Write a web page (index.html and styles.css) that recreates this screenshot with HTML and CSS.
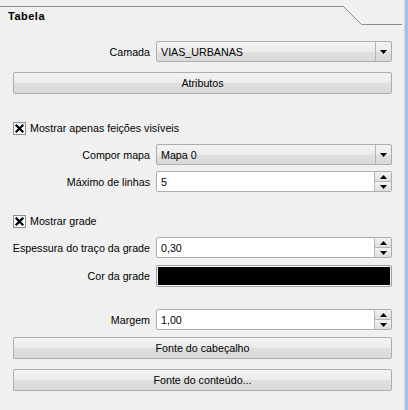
FILE: index.html
```html
<!DOCTYPE html>
<html lang="pt">
<head>
<meta charset="utf-8">
<link rel="stylesheet" href="styles.css">
</head>
<body>
<div class="panel">
  <div class="main">
    <div class="header">
      <svg class="tabline" width="405" height="26" viewBox="0 0 405 26"><path d="M0 6.5 H343.5 L361.5 24.5 H402" fill="none" stroke="#8e8e8e" stroke-width="1"/></svg>
      <span class="title">Tabela</span>
    </div>
    <div class="content">
      <div class="form first">
        <label class="lbl">Camada</label>
        <div class="combo"><span class="val">VIAS_URBANAS</span><span class="drop"><svg width="7" height="4" viewBox="0 0 7 4"><path d="M0 0H7L3.5 4Z" fill="#000"/></svg></span></div>
      </div>
      <button class="btn b-attr">Atributos</button>

      <div class="check c1"><span class="box"><svg width="13" height="13" viewBox="0 0 13 13"><path d="M3.5 3.5L9.5 9.5M9.5 3.5L3.5 9.5" stroke="#000" stroke-width="2.2" stroke-linecap="square"/></svg></span><span>Mostrar apenas feições visíveis</span></div>
      <div class="form f2">
        <label class="lbl">Compor mapa</label>
        <div class="combo"><span class="val">Mapa 0</span><span class="drop"><svg width="7" height="4" viewBox="0 0 7 4"><path d="M0 0H7L3.5 4Z" fill="#000"/></svg></span></div>
        <label class="lbl">Máximo de linhas</label>
        <div class="spin"><span class="val">5</span><span class="arrows"><span class="up"><svg width="7" height="4" viewBox="0 0 7 4"><path d="M0 4H7L3.5 0Z" fill="#000"/></svg></span><span class="down"><svg width="7" height="4" viewBox="0 0 7 4"><path d="M0 0H7L3.5 4Z" fill="#000"/></svg></span></span></div>
      </div>

      <div class="check c2"><span class="box"><svg width="13" height="13" viewBox="0 0 13 13"><path d="M3.5 3.5L9.5 9.5M9.5 3.5L3.5 9.5" stroke="#000" stroke-width="2.2" stroke-linecap="square"/></svg></span><span>Mostrar grade</span></div>
      <div class="form f3">
        <label class="lbl">Espessura do traço da grade</label>
        <div class="spin"><span class="val">0,30</span><span class="arrows"><span class="up"><svg width="7" height="4" viewBox="0 0 7 4"><path d="M0 4H7L3.5 0Z" fill="#000"/></svg></span><span class="down"><svg width="7" height="4" viewBox="0 0 7 4"><path d="M0 0H7L3.5 4Z" fill="#000"/></svg></span></span></div>
        <label class="lbl">Cor da grade</label>
        <div class="color"><span class="swatch"></span></div>
      </div>

      <div class="form f4">
        <label class="lbl">Margem</label>
        <div class="spin"><span class="val">1,00</span><span class="arrows"><span class="up"><svg width="7" height="4" viewBox="0 0 7 4"><path d="M0 4H7L3.5 0Z" fill="#000"/></svg></span><span class="down"><svg width="7" height="4" viewBox="0 0 7 4"><path d="M0 0H7L3.5 4Z" fill="#000"/></svg></span></span></div>
      </div>
      <button class="btn b-cab">Fonte do cabeçalho</button>
      <button class="btn b-cont">Fonte do conteúdo...</button>
    </div>
  </div>
  <div class="edge"></div>
</div>
</body>
</html>
```
FILE: styles.css
```css
html, body {
  margin: 0;
  padding: 0;
  background: #f0f0f0;
}
body {
  font-family: "Liberation Sans", Arial, sans-serif;
  font-size: 10.7px;
  color: #000;
}
.panel {
  width: 408px;
  height: 410px;
  display: flex;
  overflow: hidden;
}
.main {
  flex: 1;
  display: flex;
  flex-direction: column;
}
.edge {
  width: 3px;
  background: #98c5ee;
  border-left: 1px solid #d4d4d4;
}
.header {
  position: relative;
  height: 26px;
}
.tabline {
  position: absolute;
  left: 0;
  top: 0;
}
.title {
  display: block;
  padding: 9px 0 0 8px;
  font-weight: bold;
  font-size: 11px;
  letter-spacing: 0.5px;
  line-height: 14px;
}
.content {
  display: flex;
  flex-direction: column;
  padding: 0 12px 0 12px;
}
.form {
  display: grid;
  grid-template-columns: 138px 1fr;
  column-gap: 6px;
  align-items: center;
}
.first { margin-top: 15px; }
.f2 { margin-top: 8px; row-gap: 6px; }
.f3 { margin-top: 8px; row-gap: 7px; }
.f4 { margin-top: 22px; }
.lbl {
  text-align: right;
  white-space: nowrap;
  line-height: 14px;
}
.combo {
  height: 21px;
  box-sizing: border-box;
  border: 1px solid #acacac;
  border-radius: 2px;
  background: linear-gradient(to bottom, #f3f3f3 0%, #ebebeb 50%, #dfdfdf 51%, #dadada 100%);
  display: flex;
  align-items: center;
}
.val {
  flex: 1;
  padding-left: 4px;
  line-height: 14px;
}
.drop {
  width: 15px;
  align-self: stretch;
  border-left: 1px solid #b6b6b6;
  display: flex;
  align-items: center;
  justify-content: center;
}
.drop svg, .arrows svg { display: block; }
.spin {
  height: 21px;
  box-sizing: border-box;
  border: 1px solid #abadb3;
  border-radius: 2px;
  background: #fff;
  display: flex;
  align-items: center;
}
.arrows {
  width: 16px;
  align-self: stretch;
  display: flex;
  flex-direction: column;
  border-left: 1px solid #b6b6b6;
}
.arrows .up, .arrows .down {
  flex: 1;
  display: flex;
  align-items: center;
  justify-content: center;
  background: linear-gradient(to bottom, #f3f3f3, #dedede);
}
.arrows .up { border-bottom: 1px solid #b6b6b6; }
.color {
  height: 22px;
  box-sizing: border-box;
  border: 1px solid #9c9c9c;
  border-radius: 2px;
  padding: 1px;
  background: #f4f4f4;
  display: flex;
}
.swatch {
  flex: 1;
  background: #000;
}
.btn {
  margin-left: 1px;
  height: 22px;
  box-sizing: border-box;
  border: 1px solid #acacac;
  border-radius: 2px;
  background: linear-gradient(to bottom, #f3f3f3 0%, #ebebeb 50%, #dfdfdf 51%, #dadada 100%);
  font-family: inherit;
  font-size: inherit;
  color: #000;
  padding: 0;
}
.b-attr { margin-top: 10px; }
.b-cab { margin-top: 7px; }
.b-cont { margin-top: 10px; }
.check {
  display: flex;
  align-items: center;
  gap: 4px;
  margin-left: 1px;
  height: 16px;
  line-height: 14px;
}
.c1 { margin-top: 26px; }
.c2 { margin-top: 21px; }
.box {
  width: 13px;
  height: 13px;
  box-sizing: border-box;
  border: 1px solid #8e8f8f;
  background: linear-gradient(to bottom, #f4f4f4, #ffffff);
  position: relative;
}
.box svg {
  position: absolute;
  left: -1px;
  top: -1px;
}
```
